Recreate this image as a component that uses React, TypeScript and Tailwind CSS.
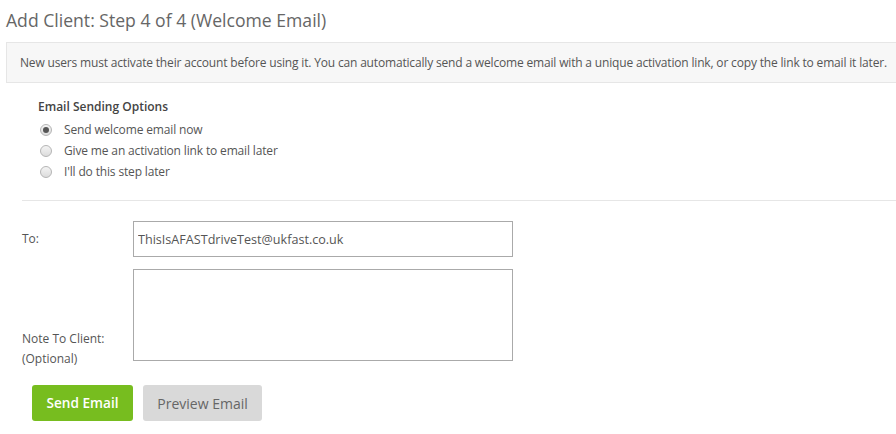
import React from 'react';

const Radio: React.FC<{ checked?: boolean; label: string }> = ({ checked, label }) => (
  <label className="flex h-[21px] items-center">
    <span className="ml-[40px] flex h-[12px] w-[12px] items-center justify-center rounded-full border border-[#b5b5b5] bg-gradient-to-b from-[#f4f4f4] to-[#dcdcdc]">
      {checked && <span className="h-[6px] w-[6px] rounded-full bg-[#555]" />}
    </span>
    <span className="ml-[12px] text-[12px] tracking-[-0.15px] text-[#555]">{label}</span>
  </label>
);

const App: React.FC = () => {
  return (
    <div className="h-[434px] w-[896px] overflow-hidden bg-white font-['Open_Sans',sans-serif] text-[#555]">
      {/* Title */}
      <h1 className="pl-[6px] pt-[8px] text-[17.6px] leading-[24px] text-[#666]">
        Add Client: Step 4 of 4 (Welcome Email)
      </h1>

      {/* Info box */}
      <div className="ml-[6px] mt-[10px] flex h-[41px] items-center border border-r-0 border-[#e6e6e6] bg-[#f7f7f7] pl-[13px] text-[12px] tracking-[-0.17px] whitespace-nowrap text-[#555]">
        New users must activate their account before using it. You can automatically send a welcome email with a unique activation link, or copy the link to email it later.
      </div>

      {/* Options */}
      <div className="pt-[16px]">
        <div className="pl-[38px] text-[12px] font-semibold leading-[16px] text-[#444]">Email Sending Options</div>
        <div className="mt-[4px]">
          <Radio checked label="Send welcome email now" />
          <Radio label="Give me an activation link to email later" />
          <Radio label="I'll do this step later" />
        </div>
      </div>

      <div className="ml-[22px] mt-[18px] border-t border-[#e6e6e6]" />

      {/* Form */}
      <div className="pl-[22px] pt-[20px]">
        <div className="flex items-center">
          <span className="w-[111px] text-[12px] text-[#555]">To:</span>
          <input
            readOnly
            value="ThisIsAFASTdriveTest@ukfast.co.uk"
            className="h-[36px] w-[380px] border border-[#aaa] px-[4px] text-[12.6px] text-[#555] outline-none"
          />
        </div>
        <div className="mt-[12px] flex items-end">
          <div className="w-[111px] text-[12px] leading-[20px] text-[#555]">
            Note To Client:
            <br />
            (Optional)
          </div>
          <textarea className="mb-[8px] h-[92px] w-[380px] resize-none border border-[#aaa] outline-none" />
        </div>
        <div className="ml-[10px] mt-[16px] flex gap-[10px]">
          <button className="h-[36px] w-[101px] rounded-[3px] bg-[#77bd1f] text-[13.6px] font-semibold text-white">
            Send Email
          </button>
          <button className="h-[36px] w-[119px] rounded-[3px] bg-[#d9d9d9] text-[14px] text-[#666]">
            Preview Email
          </button>
        </div>
      </div>
    </div>
  );
};

export default App;
